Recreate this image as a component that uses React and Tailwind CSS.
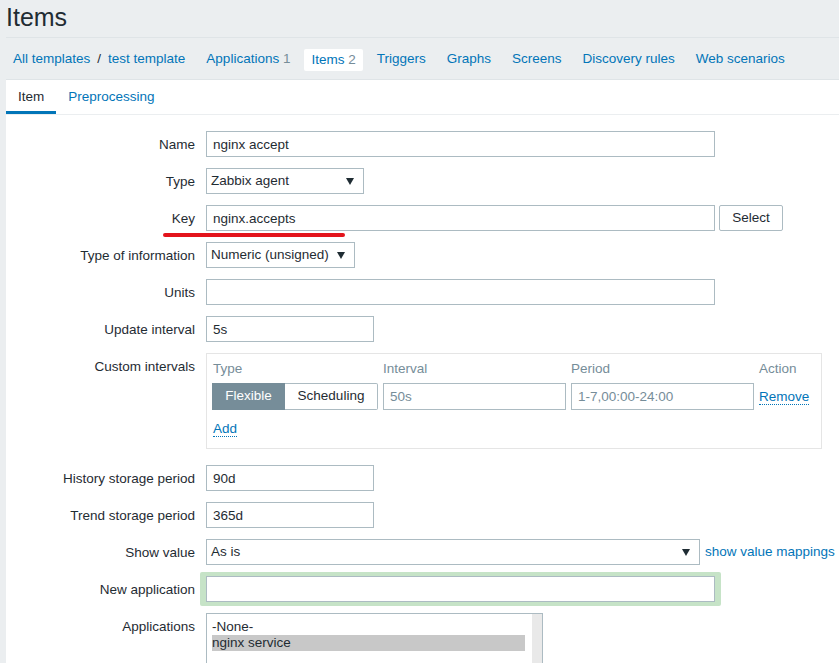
import React from "react";

const Arrow = () => (
  <svg width="8" height="7" viewBox="0 0 8 7" className="shrink-0">
    <polygon points="0,0 8,0 4,7" fill="#1f2c33" />
  </svg>
);

function Row({ label, children, className = "mb-[11px]" }) {
  return (
    <div className={"flex items-start " + className}>
      <div className="w-[189px] shrink-0 text-right h-[26px] leading-[27px]">{label}</div>
      <div className="ml-[11px]">{children}</div>
    </div>
  );
}

function TextBox({ value, width, muted }) {
  return (
    <div
      className={
        "h-[26px] leading-[25px] border border-[#acbbc2] bg-white px-[6px] whitespace-nowrap overflow-hidden " +
        (muted ? "text-[#768d99] " : "")
      }
      style={{ width }}
    >
      {value}
    </div>
  );
}

function SelectBox({ value, width }) {
  return (
    <div
      className="h-[26px] border border-[#acbbc2] bg-white pl-[4px] pr-[9px] flex items-center justify-between"
      style={{ width }}
    >
      <span className="pt-[1px]">{value}</span>
      <Arrow />
    </div>
  );
}

const navLinks = ["Triggers", "Graphs", "Screens", "Discovery rules", "Web scenarios"];

export default function App() {
  return (
    <div className="h-[663px] overflow-hidden bg-[#ebeef0] text-[13.5px] text-[#1f2c33] font-['Liberation_Sans',Arial,sans-serif]">
      <div className="pl-[6px]">
        <div className="h-[38px] border-b border-[#dfe4e7] flex items-center">
          <h1 className="text-[25px] leading-none -mt-[2px]">Items</h1>
        </div>
        <nav className="h-[42px] pt-[2px] border-b border-[#dfe4e7] flex items-center gap-[7px] text-[#0275b8]">
          <div className="flex items-center">
            <span className="px-[7px]">All templates</span>
            <span className="text-[#1f2c33]">/</span>
            <span className="px-[7px]">test template</span>
          </div>
          <span className="px-[7px]">
            Applications <span className="text-[#768d99]">1</span>
          </span>
          <span className="px-[7px] h-[22px] leading-[22px] bg-white rounded-[2px]">
            Items <span className="text-[#768d99]">2</span>
          </span>
          {navLinks.map((n) => (
            <span key={n} className="px-[7px]">
              {n}
            </span>
          ))}
        </nav>
      </div>

      <div className="ml-[6px] bg-white h-full">
        <div className="h-[35px] border-b border-[#ebeef0] flex">
          <div className="px-[12px] h-[34px] flex items-center border-b-[3px] border-[#0275b8] pt-[3px]">Item</div>
          <div className="px-[12px] h-[34px] flex items-center text-[#0275b8]">Preprocessing</div>
        </div>

        <div className="pt-[16px]">
          <Row label="Name">
            <TextBox value="nginx accept" width={509} />
          </Row>
          <Row label="Type">
            <SelectBox value="Zabbix agent" width={158} />
          </Row>
          <div className="relative">
            <Row label="Key">
              <div className="flex gap-[4px]">
                <TextBox value="nginx.accepts" width={509} />
                <button className="h-[26px] w-[64px] border border-[#acbbc2] rounded-[2px] bg-white text-[#1f2c33] pt-[1px]">
                  Select
                </button>
              </div>
            </Row>
            <div className="absolute left-[157px] top-[28px] w-[182px] h-[4px] rounded-full bg-[#e3141c]" />
          </div>
          <Row label="Type of information">
            <SelectBox value="Numeric (unsigned)" width={149} />
          </Row>
          <Row label="Units">
            <TextBox value="" width={509} />
          </Row>
          <Row label="Update interval">
            <TextBox value="5s" width={168} />
          </Row>
          <Row label="Custom intervals" className="mb-[16px]">
            <div className="w-[616px] h-[96px] border border-[#e5e5e5] pl-[5px] pt-[5px]">
              <div className="grid grid-cols-[166px_183px_183px_auto] gap-x-[5px] text-[#768d99] h-[20px] leading-[20px]">
                <span className="pl-[1px]">Type</span>
                <span>Interval</span>
                <span>Period</span>
                <span>Action</span>
              </div>
              <div className="mt-[4px] grid grid-cols-[166px_183px_183px_auto] gap-x-[5px] items-center">
                <div className="flex h-[27px]">
                  <div className="w-[73px] flex items-center justify-center bg-[#768d99] border border-[#768d99] text-white">
                    Flexible
                  </div>
                  <div className="w-[93px] flex items-center justify-center border border-[#acbbc2] border-l-0 rounded-r-[2px]">
                    Scheduling
                  </div>
                </div>
                <div className="h-[27px] leading-[26px] border border-[#acbbc2] px-[6px] text-[#768d99]">50s</div>
                <div className="h-[27px] leading-[26px] border border-[#acbbc2] px-[6px] text-[#768d99]">1-7,00:00-24:00</div>
                <span className="text-[#0275b8] border-b border-dotted border-[#0275b8] justify-self-start leading-[15px] mt-[1px]">
                  Remove
                </span>
              </div>
              <div className="mt-[9px] pl-[1px]">
                <span className="text-[#0275b8] border-b border-dotted border-[#0275b8] inline-block leading-[15px]">Add</span>
              </div>
            </div>
          </Row>
          <Row label="History storage period">
            <TextBox value="90d" width={168} />
          </Row>
          <Row label="Trend storage period">
            <TextBox value="365d" width={168} />
          </Row>
          <Row label="Show value">
            <div className="flex items-center gap-[5px]">
              <SelectBox value="As is" width={494} />
              <span className="text-[#0275b8] whitespace-nowrap">show value mappings</span>
            </div>
          </Row>
          <Row label="New application">
            <div className="-mx-[6px] -my-[4px] px-[6px] py-[4px] bg-[#c6e3c7] rounded-[2px]">
              <TextBox value="" width={509} />
            </div>
          </Row>
          <Row label="Applications" className="">
            <div className="w-[337px] h-[80px] border border-[#acbbc2] flex">
              <div className="flex-1 pt-[5px] pl-[5px] pr-[7px]">
                <div className="h-[16px] leading-[16px]">-None-</div>
                <div className="h-[16px] leading-[16px] bg-[#c8c8c8]">nginx service</div>
              </div>
              <div className="w-[10px] bg-[#e9e9e9]" />
            </div>
          </Row>
        </div>
      </div>
    </div>
  );
}
